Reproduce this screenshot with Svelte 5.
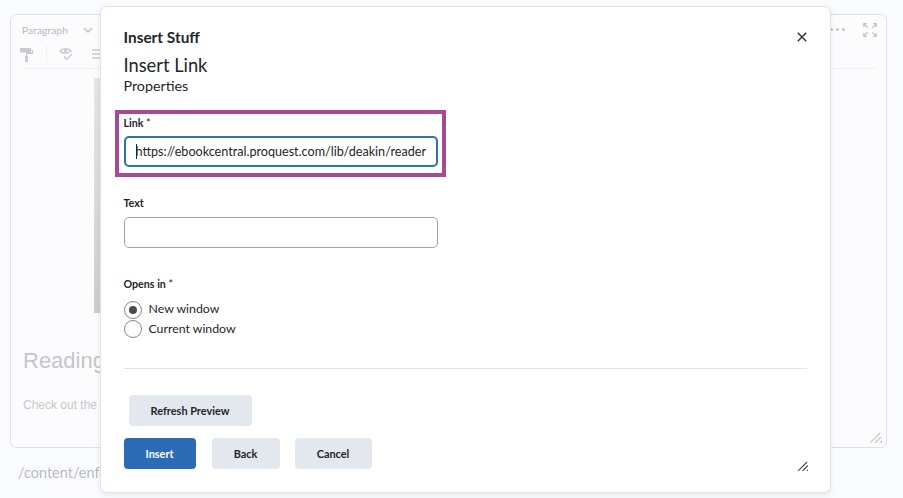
<script>
	let target = $state('new');
	const url = 'https://ebookcentral.proquest.com/lib/deakin/reader';
</script>

<div class="page">
	<div class="editor">
		<div class="toolbar">
			<div class="row-top">
				<span class="format">Paragraph</span>
				<svg class="chevron" viewBox="0 0 10 6" width="10" height="6"><path d="M1 1l4 4 4-4" fill="none" stroke="#bcbfc4" stroke-width="1.3" /></svg>
				<span class="spacer"></span>
				<span class="dots"><i></i><i></i><i></i></span>
				<svg class="fullscreen" viewBox="0 0 14 14" width="14" height="14">
					<path d="M0.7 4V0.7H4M0.7 0.7l4 4M10 0.7h3.3V4M13.3 0.7l-4 4M0.7 10v3.3H4M0.7 13.3l4-4M10 13.3h3.3V10M13.3 13.3l-4-4" fill="none" stroke="#c6c8cc" stroke-width="1.3" />
				</svg>
			</div>
			<div class="row-icons">
				<svg viewBox="0 0 14 15" width="14" height="15"><path d="M0 1h11v2h2v4H7v2h1v6H5V9h1V5.500h6V4h-1v1.500H0z" fill="#c9cbcf" /></svg>
				<span class="sep"></span>
				<svg viewBox="0 0 15 14" width="15" height="14"><path d="M1 4c2-3 8-3 11 0-3 3-9 3-11 0z" fill="none" stroke="#c9cbcf" stroke-width="1.4" /><circle cx="6.500" cy="4" r="1.700" fill="#c9cbcf" /><path d="M5 9l2.500 3.500L13 7" fill="none" stroke="#c9cbcf" stroke-width="1.400" /></svg>
				<svg class="align" viewBox="0 0 12 12" width="12" height="12"><path d="M0 2h12M0 6h12M0 10h8" stroke="#c9cbcf" stroke-width="1.4" /></svg>
			</div>
		</div>
		<div class="doc">
			<div class="picture"></div>
			<h2>Reading</h2>
			<p>Check out the</p>
		</div>
		<svg class="grip" viewBox="0 0 12 11" width="12" height="11"><path d="M0 11L10 1M5 11l6-6M10 11l2-2" fill="none" stroke="#c2c4c8" stroke-width="1.100" /></svg>
	</div>
	<div class="path">/content/enforced</div>

	<div class="dialog">
		<header>
			<h1>Insert Stuff</h1>
			<svg class="close" viewBox="0 0 10 10" width="10" height="10"><path d="M0.800 0.800l8.400 8.400M9.200 0.800l-8.400 8.400" stroke="#3a3c40" stroke-width="1.600" /></svg>
		</header>
		<h2>Insert Link</h2>
		<h3>Properties</h3>

		<div class="highlight">
			<label for="link">Link <span>*</span></label>
			<div class="caret-wrap">
				<input id="link" class="focused" type="text" value={url} />
				<span class="caret"></span>
			</div>
		</div>

		<div class="field text-field">
			<label for="text">Text</label>
			<input id="text" type="text" />
		</div>

		<div class="field opens">
			<span class="legend">Opens in <span>*</span></span>
			<button class="radio" onclick={() => (target = 'new')}>
				<span class="ring" class:on={target === 'new'}></span>New window
			</button>
			<button class="radio" onclick={() => (target = 'current')}>
				<span class="ring" class:on={target === 'current'}></span>Current window
			</button>
		</div>

		<hr />

		<button class="btn refresh">Refresh Preview</button>
		<div class="actions">
			<button class="btn primary">Insert</button>
			<button class="btn back">Back</button>
			<button class="btn cancel">Cancel</button>
		</div>
		<svg class="grip dialog-grip" viewBox="0 0 10 10" width="10" height="10"><path d="M0 10L9 1M4.500 10L10 4.500M9 10l1-1" fill="none" stroke="#4a4c50" stroke-width="1.200" /></svg>
	</div>
</div>

<style>
	:global(body) {
		margin: 0;
		background: #fafbfe;
	}

	.page {
		position: relative;
		width: 903px;
		height: 498px;
		overflow: hidden;
		padding: 14px 16px 0 10px;
		box-sizing: border-box;
		font-family: Lato, 'Liberation Sans', sans-serif;
	}

	.editor {
		position: relative;
		height: 434px;
		box-sizing: border-box;
		border: 1px solid #dfe1e6;
		border-radius: 6px;
		background: #fcfcfe;
	}

	.toolbar {
		margin: 0 9px 0 11px;
		border-bottom: 1px solid #f0f1f4;
		height: 54px;
		box-sizing: border-box;
	}

	.row-top {
		display: flex;
		align-items: center;
		height: 29px;
	}

	.format {
		font-size: 10.400px;
		color: #b6b9be;
	}

	.chevron {
		margin-left: 15px;
	}

	.spacer {
		flex: 1;
	}

	.dots {
		display: flex;
		gap: 3px;
		margin-right: 18px;
	}

	.dots i {
		width: 3px;
		height: 3px;
		border-radius: 50%;
		background: #bfc1c5;
	}

	.row-icons {
		display: flex;
		align-items: center;
		gap: 12px;
		height: 20px;
		margin-left: -2px;
	}

	.sep {
		width: 1px;
		height: 18px;
		background: #f0f1f4;
	}

	.align {
		margin-left: 6px;
	}

	.doc {
		padding: 9px 0 0 12px;
	}

	.picture {
		width: 8px;
		height: 235px;
		margin-left: 71px;
		background: linear-gradient(180deg, #e8e5e2, #dedad6 50%, #d0cdc9);
	}

	.doc h2 {
		margin: 32px 0 0;
		font: 400 22px/32px 'Liberation Sans', sans-serif;
		color: #c4c6ca;
	}

	.doc p {
		margin: 20px 0 0;
		font: 400 12px/16px 'Liberation Sans', sans-serif;
		color: #c6c8cc;
	}

	.grip {
		position: absolute;
		right: 4px;
		bottom: 4px;
	}

	.path {
		margin: 14px 0 0 8px;
		font-size: 14.500px;
		line-height: 22px;
		color: #b9bbc0;
	}

	.dialog {
		position: absolute;
		left: 100px;
		top: 6px;
		width: 731px;
		height: 487px;
		box-sizing: border-box;
		padding: 20px 23px 0 22.500px;
		background: #fff;
		border: 1px solid #e2e3e6;
		border-radius: 7px;
		box-shadow: 0 2px 6px rgba(0, 0, 0, 0.08);
		color: #23252a;
	}

	header {
		display: flex;
		justify-content: space-between;
		align-items: center;
	}

	h1 {
		margin: 0;
		font-size: 15.400px;
		line-height: 20px;
		font-weight: 700;
	}

	.dialog > h2 {
		margin: 6px 0 0;
		font-size: 18.300px;
		line-height: 24px;
		font-weight: 400;
	}

	h3 {
		margin: -1px 0 0;
		font-size: 14.300px;
		line-height: 20px;
		font-weight: 400;
	}

	.highlight {
		margin: 14px 0 0 -9px;
		width: 331px;
		height: 67px;
		box-sizing: border-box;
		padding: 1px 5px 0 5px;
		border: 4px solid #a64b92;
	}

	label,
	.legend {
		display: block;
		font-size: 10.700px;
		line-height: 15px;
		font-weight: 700;
		color: #23252a;
	}

	label span,
	.legend span {
		font-weight: 400;
	}

	.caret-wrap {
		position: relative;
		margin-top: 6px;
	}

	input {
		display: block;
		width: 314px;
		height: 31px;
		box-sizing: border-box;
		padding: 0 11px;
		margin: 0;
		border: 1px solid #9ea1a6;
		border-radius: 5px;
		outline: none;
		background: #fff;
		font-family: inherit;
		font-size: 12.600px;
		color: #23252a;
	}

	input.focused {
		border: 2px solid #2f6fb5;
		padding: 0 10px;
	}

	.caret {
		position: absolute;
		left: 12px;
		top: 8px;
		width: 1px;
		height: 15px;
		background: #23252a;
	}

	.text-field {
		margin-top: 18px;
	}

	.text-field label {
		margin-bottom: 7px;
	}

	.opens {
		margin-top: 28px;
	}

	.legend {
		margin-bottom: 8px;
	}

	.radio {
		display: flex;
		align-items: center;
		gap: 7px;
		height: 19.500px;
		padding: 0;
		border: 0;
		background: none;
		font-family: inherit;
		font-size: 12.300px;
		color: #23252a;
	}

	.ring {
		position: relative;
		width: 18px;
		height: 18px;
		box-sizing: border-box;
		border: 1px solid #85888d;
		border-radius: 50%;
		margin-top: 2px;
	}

	.ring.on::after {
		content: '';
		position: absolute;
		left: 4px;
		top: 4px;
		width: 8px;
		height: 8px;
		border-radius: 50%;
		background: #4a4c52;
	}

	hr {
		margin: 30px 0 0;
		border: 0;
		border-top: 1px solid #e2e3e6;
	}

	.btn {
		height: 31px;
		padding: 0;
		border: 0;
		border-radius: 4px;
		background: #e3e7ee;
		font-family: inherit;
		font-size: 10.900px;
		font-weight: 700;
		color: #23252a;
	}

	.refresh {
		display: block;
		width: 123px;
		margin: 26px 0 0 5px;
	}

	.actions {
		display: flex;
		margin-top: 12px;
	}

	.primary {
		width: 72px;
		background: #2c6bb5;
		color: #fff;
	}

	.back {
		width: 68px;
		margin-left: 16px;
	}

	.cancel {
		width: 77px;
		margin-left: 15px;
	}

	.dialog-grip {
		right: 22px;
		bottom: 21px;
	}
</style>
